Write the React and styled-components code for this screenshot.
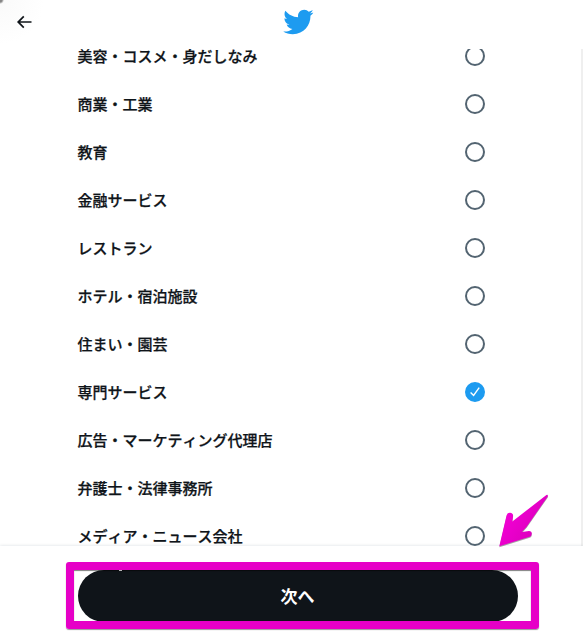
import styled, { createGlobalStyle } from "styled-components";

const GlobalStyle = createGlobalStyle`
  * {
    box-sizing: border-box;
  }

  body {
    margin: 0;
    background: #fff;
    color: #0f1419;
    font-family: "Noto Sans CJK JP", "Liberation Sans", sans-serif;
    font-kerning: none;
  }
`;

const Modal = styled.div`
  position: relative;
  display: flex;
  flex-direction: column;
  width: 583px;
  height: 634px;
  overflow: hidden;
  background: radial-gradient(circle at 0 0, #858585 0, #858585 2px, #fafafa 4px, #fff 44px);
`;

const Header = styled.header`
  display: grid;
  grid-template-columns: 1fr 32px 1fr;
  align-items: center;
  flex: none;
  height: 49px;
  padding: 0 1px 5px 14px;
`;

const BackButton = styled.button`
  display: flex;
  width: 20px;
  padding: 0;
  border: 0;
  background: none;
  color: #0f1419;

  svg {
    width: 20px;
    height: 20px;
  }
`;

const Logo = styled.svg`
  width: 32px;
  height: 32px;
  fill: #1d9bf0;
`;

const ScrollArea = styled.main`
  flex: none;
  height: 497px;
  overflow: hidden;
  border-right: 2px solid #efefef;
`;

const CategoryList = styled.ul`
  margin: -17px 0 0;
  padding: 0 96px 0 77.5px;
  list-style: none;
`;

const Category = styled.li`
  display: flex;
  align-items: center;
  justify-content: space-between;
  height: 48px;

  span {
    font-size: 15px;
    font-weight: 500;
    line-height: 20px;
    white-space: nowrap;
    -webkit-text-stroke: 0.25px #0f1419;
  }
`;

const Radio = styled.div`
  display: flex;
  align-items: center;
  justify-content: center;
  width: 20px;
  height: 20px;
  border: 2px solid ${({ $checked }) => ($checked ? "#1d9bf0" : "#536471")};
  border-radius: 50%;
  background: ${({ $checked }) => ($checked ? "#1d9bf0" : "#fff")};

  svg {
    flex: none;
    width: 12px;
    height: 12px;
  }
`;

const Footer = styled.footer`
  position: relative;
  flex: 1;
  padding: 24px 65px 0 78px;
  background: #fff;
  box-shadow: 0 0 3px rgba(101, 119, 134, 0.25);
`;

const NextButton = styled.button`
  display: block;
  width: 100%;
  height: 52px;
  padding: 0 1px 0 0;
  border: 0;
  border-radius: 26px;
  background: #0f1419;
  color: #fff;
  font-family: inherit;
  font-size: 17px;
  font-weight: 700;
  line-height: 20px;
`;

const Highlight = styled.div`
  position: absolute;
  top: 562px;
  left: 66px;
  width: 473px;
  height: 67px;
  border: 8px solid #e600c7;
  border-radius: 3px;
  box-shadow: 0 1px 1px rgba(0, 0, 0, 0.4), inset 0 1px 1px rgba(0, 0, 0, 0.5);
  pointer-events: none;

  &::after {
    content: "";
    position: absolute;
    top: 0;
    left: 45px;
    width: 3px;
    height: 1px;
    background: #b5b5b5;
  }
`;

const Pointer = styled.svg`
  position: absolute;
  top: 490px;
  left: 494px;
  width: 60px;
  height: 62px;
  filter: drop-shadow(0 1px 0.5px rgba(0, 0, 0, 0.35));
  pointer-events: none;
`;

const categories = [
  "美容・コスメ・身だしなみ",
  "商業・工業",
  "教育",
  "金融サービス",
  "レストラン",
  "ホテル・宿泊施設",
  "住まい・園芸",
  "専門サービス",
  "広告・マーケティング代理店",
  "弁護士・法律事務所",
  "メディア・ニュース会社",
];

const selected = "専門サービス";

export default function App() {
  return (
    <>
      <GlobalStyle />
      <Modal>
        <Header>
          <BackButton aria-label="戻る">
            <svg viewBox="0 0 24 24" fill="currentColor">
              <path d="M7.414 13l5.043 5.04-1.414 1.42L3.586 12l7.457-7.46 1.414 1.42L7.414 11H21v2H7.414z" />
            </svg>
          </BackButton>
          <Logo viewBox="0 0 24 24">
            <path d="M23.643 4.937c-.835.37-1.732.62-2.675.733.962-.576 1.7-1.49 2.048-2.578-.9.534-1.897.922-2.958 1.13-.85-.904-2.06-1.47-3.4-1.47-2.572 0-4.658 2.086-4.658 4.66 0 .364.042.718.12 1.06-3.873-.195-7.304-2.05-9.602-4.868-.4.69-.63 1.49-.63 2.342 0 1.616.823 3.043 2.072 3.878-.764-.025-1.482-.234-2.11-.583v.06c0 2.257 1.605 4.14 3.737 4.568-.392.106-.803.162-1.227.162-.3 0-.593-.028-.877-.082.593 1.85 2.313 3.198 4.352 3.234-1.595 1.25-3.604 1.995-5.786 1.995-.376 0-.747-.022-1.112-.065 2.062 1.323 4.51 2.093 7.14 2.093 8.57 0 13.255-7.098 13.255-13.254 0-.2-.005-.402-.014-.602.91-.658 1.7-1.477 2.323-2.41z" />
          </Logo>
        </Header>
        <ScrollArea>
          <CategoryList>
            {categories.map((name) => (
              <Category key={name}>
                <span>{name}</span>
                <Radio $checked={name === selected}>
                  {name === selected && (
                    <svg viewBox="0 0 12 12" fill="none" stroke="#fff" strokeWidth="1.4">
                      <path d="M1.6 6.4L4.6 9.4L10.2 1.7" />
                    </svg>
                  )}
                </Radio>
              </Category>
            ))}
          </CategoryList>
        </ScrollArea>
        <Footer>
          <NextButton>次へ</NextButton>
        </Footer>
        <Highlight />
        <Pointer viewBox="0 0 60 62">
          <defs>
            <linearGradient id="pointerFill" x1="0" y1="0.6" x2="0.6" y2="1">
              <stop offset="0" stopColor="#f200d4" />
              <stop offset="1" stopColor="#dc00bd" />
            </linearGradient>
          </defs>
          <path
            d="M5.3 56.3L12.6 25.2Q13.4 22.7 16 22.8Q19.3 23.2 19.1 26L18.3 31.6L52.4 4.9Q54.2 4.3 53.8 6.4L32.7 36.7L28 42L35 40.9Q37.8 41 37.8 43.5Q37.8 46 35.8 46.7Z"
            fill="url(#pointerFill)"
          />
        </Pointer>
      </Modal>
    </>
  );
}
